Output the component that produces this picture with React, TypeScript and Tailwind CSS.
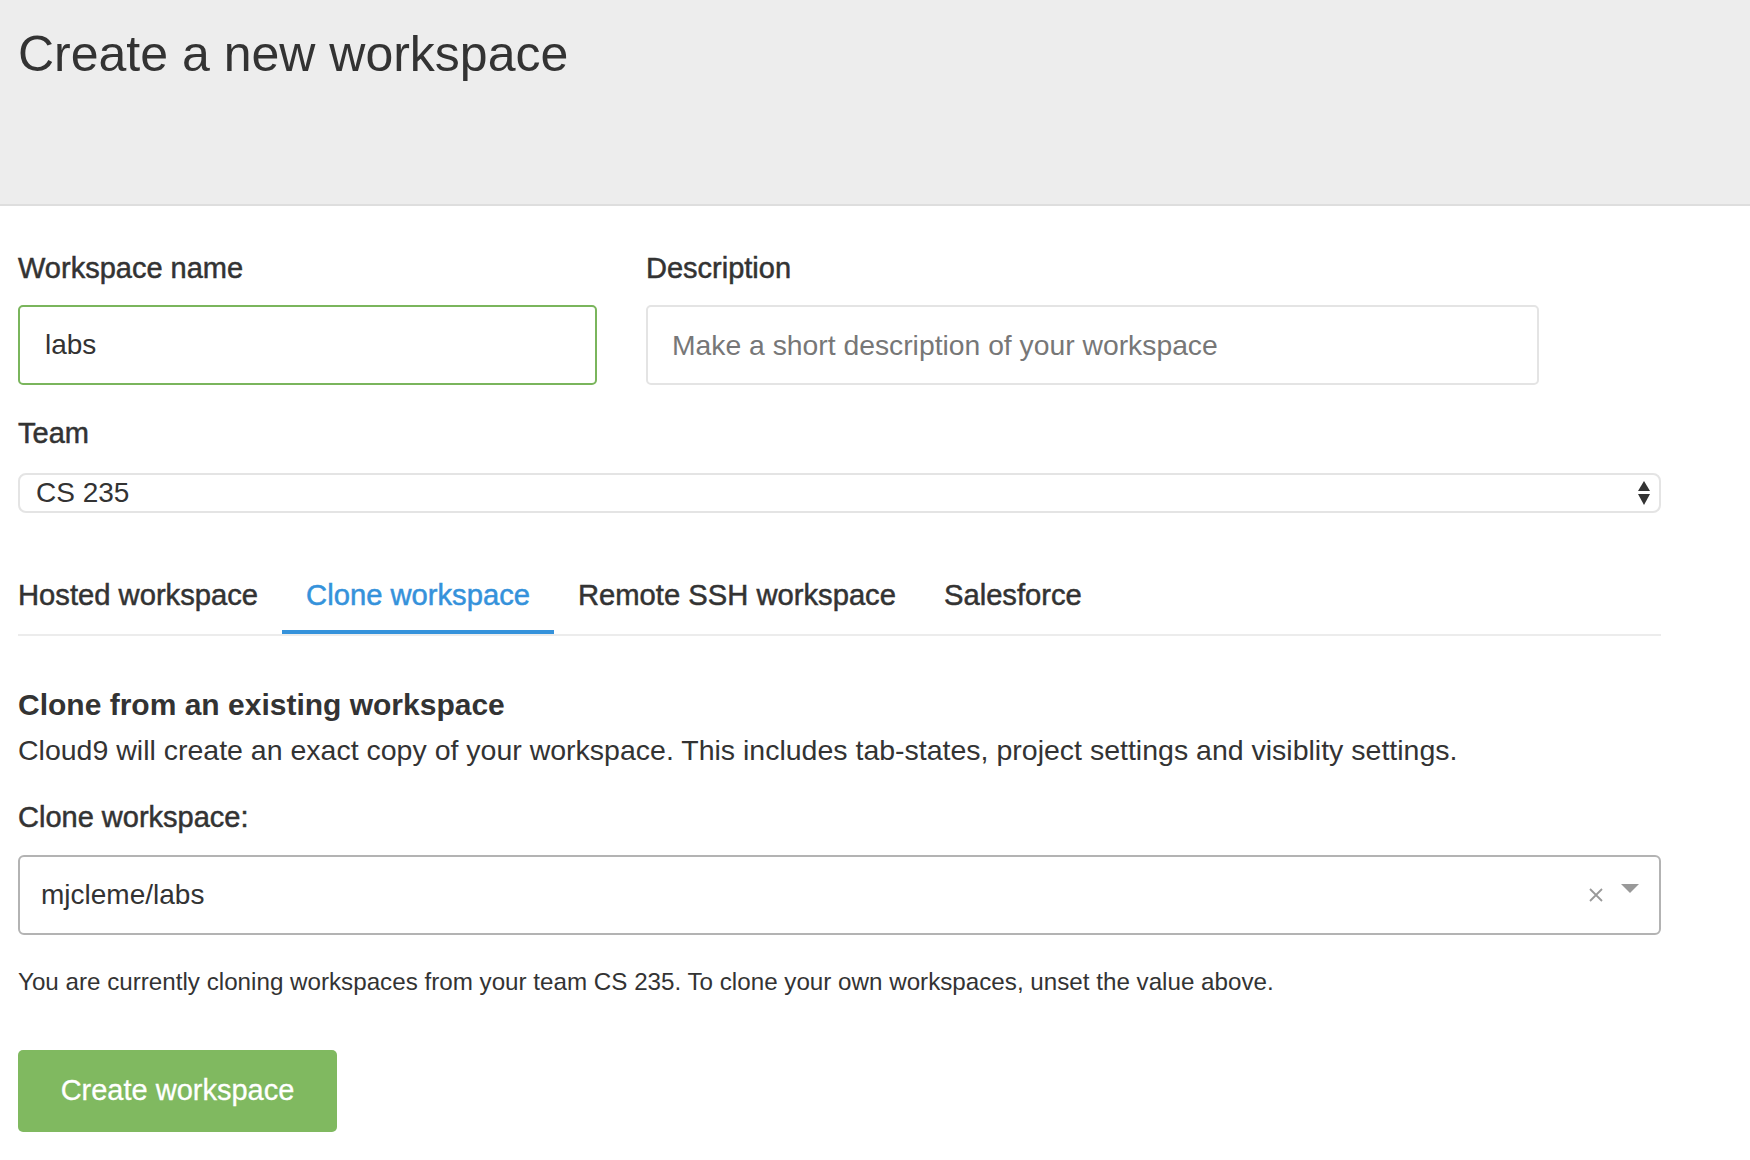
import { useState } from "react";

const tabs = ["Hosted workspace", "Clone workspace", "Remote SSH workspace", "Salesforce"];

function SortArrows() {
  return (
    <svg width="14" height="25" viewBox="0 0 14 25" className="text-[#333]">
      <path d="M7 0 L13 10 L1 10 Z" fill="currentColor" />
      <path d="M1 13 L13 13 L7 24 Z" fill="currentColor" />
    </svg>
  );
}

function ClearIcon() {
  return (
    <svg width="16" height="16" viewBox="0 0 16 16">
      <path d="M2 2 L14 14 M14 2 L2 14" stroke="#999" strokeWidth="1.8" fill="none" />
    </svg>
  );
}

function Caret() {
  return (
    <svg width="18" height="10" viewBox="0 0 18 10">
      <path d="M0 0 L18 0 L9 9 Z" fill="#999" />
    </svg>
  );
}

export default function App() {
  const [active, setActive] = useState(1);

  return (
    <div className="min-h-screen bg-white font-['Liberation_Sans',Arial,sans-serif] text-[#333]">
      <header className="h-[206px] border-b-2 border-[#dedede] bg-[#ededed] px-[18px] pt-[29px]">
        <h1 className="text-[50px] leading-none">Create a new workspace</h1>
      </header>

      <main className="w-[1679px] px-[18px]">
        <div className="flex gap-[49px] pt-[48px]">
          <div className="flex w-[579px] flex-col">
            <label className="mb-[22px] text-[29px] leading-none [-webkit-text-stroke:0.5px]">Workspace name</label>
            <div className="flex h-[80px] items-center rounded-[5px] border-2 border-[#7ab55c] pl-[25px] text-[28px] leading-none">
              labs
            </div>
          </div>
          <div className="flex w-[893px] flex-col">
            <label className="mb-[22px] text-[29px] leading-none [-webkit-text-stroke:0.5px]">Description</label>
            <div className="flex h-[80px] items-center rounded-[5px] border-2 border-[#e4e4e4] pl-[24px] text-[28.3px] leading-none text-[#777]">
              Make a short description of your workspace
            </div>
          </div>
        </div>

        <label className="mt-[34px] block text-[29px] leading-none [-webkit-text-stroke:0.5px]">Team</label>
        <div className="mt-[25px] flex h-[40px] items-center justify-between rounded-[8px] border-2 border-[#e4e4e4] pl-[16px] pr-[8px] text-[28px] leading-none">
          <span>CS 235</span>
          <SortArrows />
        </div>

        <ul className="mt-[68px] flex border-b-2 border-[#ececec]">
          {tabs.map((t, i) => (
            <li
              key={t}
              onClick={() => setActive(i)}
              className={
                (i === 0 ? "pl-0 pr-[24px] " : "px-[24px] ") +
                (i === active
                  ? "border-b-4 border-[#3592db] pb-[20px] text-[#3592db] "
                  : "border-b-4 border-transparent pb-[20px] ") +
                "cursor-pointer text-[29.2px] leading-none [-webkit-text-stroke:0.5px]"
              }
            >
              {t}
            </li>
          ))}
        </ul>

        <h2 className="mt-[54px] text-[30px] font-bold leading-none">Clone from an existing workspace</h2>
        <p className="mt-[16px] text-[28.5px] leading-none">
          Cloud9 will create an exact copy of your workspace. This includes tab-states, project settings and visiblity settings.
        </p>

        <label className="mt-[38px] block text-[29px] leading-none [-webkit-text-stroke:0.5px]">Clone workspace:</label>
        <div className="mt-[23px] flex h-[80px] items-center rounded-[6px] border-2 border-[#b3b3b3] pl-[21px] pr-[20px] text-[28px] leading-none">
          <span className="flex-1">mjcleme/labs</span>
          <ClearIcon />
          <span className="mb-[12px] ml-[17px]">
            <Caret />
          </span>
        </div>

        <p className="mt-[35px] text-[24.2px] leading-none">
          You are currently cloning workspaces from your team CS 235. To clone your own workspaces, unset the value above.
        </p>

        <button className="mt-[56px] flex h-[82px] w-[319px] items-center justify-center rounded-[5px] bg-[#80b960] text-[29px] leading-none text-white [-webkit-text-stroke:0.3px]">
          Create workspace
        </button>
      </main>
    </div>
  );
}
